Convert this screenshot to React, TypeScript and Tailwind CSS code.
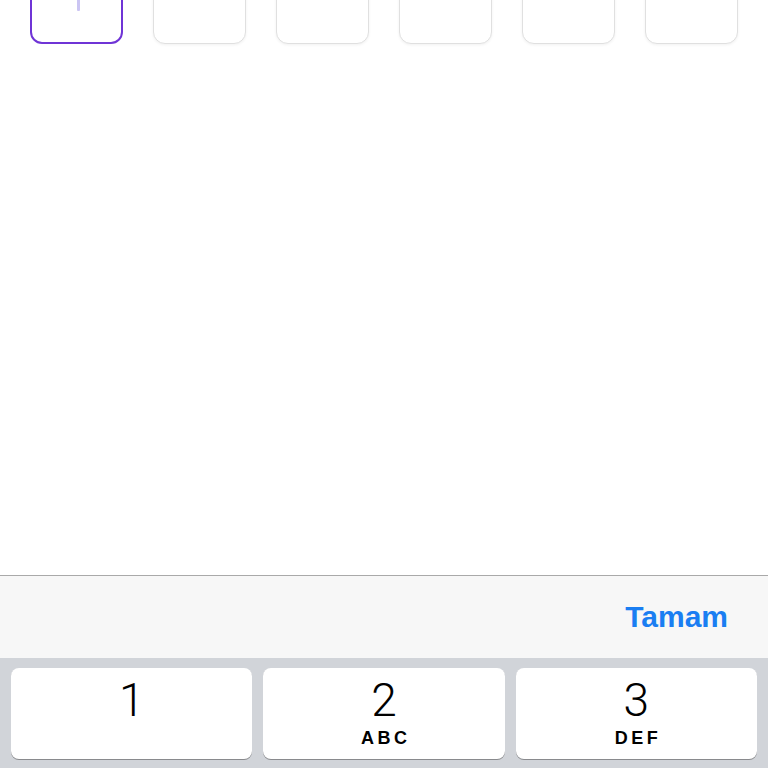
import React from "react";

const keys = [
  { d: "1", l: "" },
  { d: "2", l: "ABC" },
  { d: "3", l: "DEF" },
];

export default function App() {
  return (
    <div className="w-[768px] h-[768px] overflow-hidden bg-white flex flex-col" style={{ fontFamily: '"Liberation Sans", Arial, sans-serif' }}>
      <div className="flex gap-[30px] pl-[30px] mt-[-49px]">
        {[0, 1, 2, 3, 4, 5].map((i) => (
          <div
            key={i}
            className={
              i === 0
                ? "w-[93px] h-[93px] rounded-[12px] border-2 border-[#6f34d6] bg-white flex items-center justify-center"
                : "w-[93px] h-[93px] rounded-[12px] border-[1.5px] border-[#e0e0e0] bg-white shadow-[0_1px_3px_rgba(0,0,0,0.06)]"
            }
          >
            {i === 0 && <div className="w-[3px] h-[30px] ml-[3px] mt-[-4px] bg-[#cbc5f3] rounded-[1px]" />}
          </div>
        ))}
      </div>
      <div className="flex-1" />
      <div className="border-t border-[#a9a9a9] h-[83px] bg-[#f7f7f7] flex items-center justify-end pr-[40px]">
        <span className="text-[30px] font-bold text-[#1a7ef2] leading-none">Tamam</span>
      </div>
      <div className="h-[110px] bg-[#d1d4d9] pt-[10px] px-[11px] grid grid-cols-3 gap-[11px] items-start">
        {keys.map((k) => (
          <div key={k.d} className="h-[91px] rounded-[8px] bg-white shadow-[0_1px_0_#898a8d] flex flex-col items-center pt-[9px]">
            <span className="text-[46px] leading-none font-light text-black" style={{ fontFamily: 'Roboto, "Liberation Sans", sans-serif' }}>
              {k.d}
            </span>
            {k.l && (
              <span className="mt-[6px] text-[18px] leading-none font-bold tracking-[3.5px] pl-[3.5px] text-black">{k.l}</span>
            )}
          </div>
        ))}
      </div>
    </div>
  );
}
